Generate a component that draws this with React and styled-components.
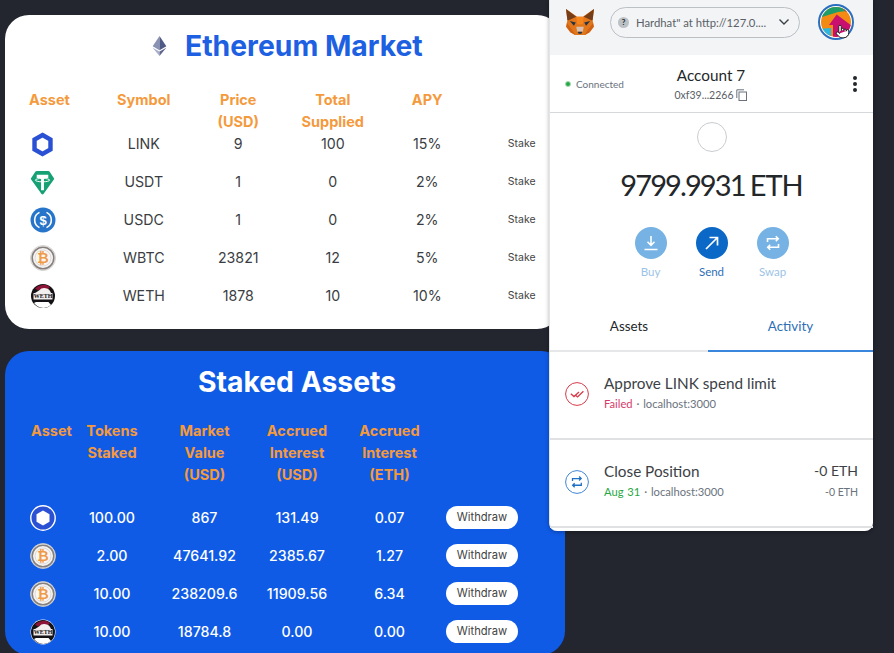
import React from "react";
import styled, { createGlobalStyle } from "styled-components";
import { Pointer } from "lucide-react";

const GlobalStyle = createGlobalStyle`
  html, body {
    margin: 0;
    height: 653px;
    overflow: hidden;
    background: #23252f;
    font-family: Inter, "Liberation Sans", sans-serif;
  }
`;

const Page = styled.div`
  position: relative;
  width: 894px;
  height: 653px;
  overflow: hidden;
  padding: 15px 0 0 5px;
  box-sizing: border-box;
  display: flex;
  flex-direction: column;
  gap: 22px;
`;

const MarketCard = styled.section`
  width: 556px;
  height: 314px;
  flex-shrink: 0;
  box-sizing: border-box;
  background: #fff;
  border-radius: 24px;
  padding: 14px 0 0 24px;
`;

const StakedCard = styled.section`
  width: 560px;
  height: 304px;
  flex-shrink: 0;
  box-sizing: border-box;
  background: #0f5be6;
  border-radius: 24px;
  padding: 14px 0 0 26px;
`;

const TitleRow = styled.div`
  display: flex;
  align-items: center;
  gap: 18px;
  height: 34px;
  margin: 0 0 26px 123px;
`;

const Title = styled.h1`
  margin: 0;
  font-size: 28.3px;
  line-height: 34px;
  font-weight: 700;
  color: ${(p) => p.$color};
`;

const StakedTitle = styled(Title)`
  text-align: center;
  width: 532px;
  margin-bottom: 21px;
`;

const TableRow = styled.div`
  display: grid;
  grid-template-columns: ${(p) => p.$cols};
  align-items: center;
  justify-items: center;
  height: ${(p) => (p.$header ? "auto" : "24px")};
  margin-bottom: ${(p) => (p.$header ? p.$gap : "14px")};
  font-size: 14.2px;
  color: ${(p) => p.$color};
  font-weight: ${(p) => p.$weight};
`;

const HeadCell = styled.div`
  font-size: 14.5px;
  line-height: 22px;
  font-weight: 700;
  color: #f59a3c;
  text-align: center;
  align-self: start;
  white-space: nowrap;
  justify-self: ${(p) => (p.$first ? "start" : "center")};
`;

const IconCell = styled.div`
  justify-self: start;
  margin: 2px 0 0 ${(p) => p.$left}px;
  height: 24px;
  display: flex;
  align-items: center;
`;

const StakeLink = styled.span`
  font-size: 10.5px;
  color: #444;
`;

const WithdrawButton = styled.button`
  width: 72px;
  height: 23px;
  padding: 0;
  border: none;
  border-radius: 12px;
  background: #fff;
  color: #444;
  font-family: inherit;
  font-size: 11.2px;
  font-weight: 400;
`;

/* metamask window floats over the dapp */
const Wallet = styled.aside`
  position: absolute;
  left: 549px;
  top: 0;
  width: 324px;
  height: 531px;
  background: #fff;
  border-left: 1px solid #e2e4e8;
  box-sizing: border-box;
  border-radius: 0 0 8px 8px;
  box-shadow: 0 1px 4px rgba(0, 0, 0, 0.3);
  font-family: Lato, "Open Sans", sans-serif;
  color: #24272a;
  display: flex;
  flex-direction: column;
`;

const WalletTop = styled.header`
  height: 55px;
  background: #f2f4f6;
  display: flex;
  align-items: center;
  padding: 0 0 11px 15px;
  box-sizing: border-box;
`;

const NetworkPill = styled.div`
  width: 190px;
  height: 31px;
  margin-left: 15px;
  box-sizing: border-box;
  border: 1px solid #bbc0c5;
  border-radius: 16px;
  display: flex;
  align-items: center;
  padding: 0 9px 0 7px;
  font-size: 11.3px;
  color: #5a6066;
  white-space: nowrap;
`;

const QuestionBadge = styled.span`
  width: 11px;
  height: 11px;
  border-radius: 50%;
  background: #bbc0c5;
  color: #24272a;
  font-size: 8px;
  font-weight: 700;
  display: flex;
  align-items: center;
  justify-content: center;
  margin-right: 7px;
  flex-shrink: 0;
`;

const PillText = styled.span`
  flex: 1;
`;

const AvatarWrap = styled.div`
  position: relative;
  margin-left: 18px;
  width: 36px;
  height: 36px;
`;

const HandCursor = styled.div`
  position: absolute;
  left: 17px;
  top: 20px;
  line-height: 0;
`;

const AccountBar = styled.div`
  height: 57px;
  border-bottom: 1px solid #d6d9dc;
  display: grid;
  grid-template-columns: 1fr auto 1fr;
  align-items: center;
  padding: 0 16px 0 15px;
`;

const Connected = styled.div`
  display: flex;
  align-items: center;
  gap: 5px;
  font-size: 10px;
  color: #6a737d;
`;

const GreenDot = styled.span`
  width: 4px;
  height: 4px;
  border-radius: 50%;
  background: #28a745;
  border: 1.5px solid #a8d8b4;
`;

const AccountInfo = styled.div`
  text-align: center;
`;

const AccountName = styled.div`
  font-size: 15.3px;
  line-height: 20px;
  margin-bottom: 3px;
`;

const Address = styled.div`
  font-size: 10.5px;
  line-height: 14px;
  color: #5a6066;
  display: flex;
  align-items: center;
  gap: 3px;
`;

const KebabWrap = styled.div`
  justify-self: end;
  display: flex;
  flex-direction: column;
  gap: 2px;
  margin-top: 1px;
`;

const KebabDot = styled.span`
  width: 4px;
  height: 4px;
  border-radius: 50%;
  background: #24272a;
`;

const BalanceSection = styled.div`
  display: flex;
  flex-direction: column;
  align-items: center;
  height: 191px;
  padding-top: 9px;
  box-sizing: border-box;
`;

const TokenCircle = styled.div`
  width: 28px;
  height: 28px;
  border-radius: 50%;
  border: 1px solid #c9cccf;
`;

const Balance = styled.div`
  margin-top: 13px;
  font-size: 29px;
  line-height: 40px;
  font-weight: 400;
  display: flex;
  gap: 5px;
`;

const BalanceAmount = styled.span`
  letter-spacing: -1.9px;
`;

const BalanceUnit = styled.span`
  letter-spacing: -1px;
`;

const ActionRow = styled.div`
  margin-top: 22px;
  display: flex;
  gap: 29px;
`;

const Action = styled.div`
  width: 32px;
  display: flex;
  flex-direction: column;
  align-items: center;
  gap: 6px;
  font-size: 11.5px;
  color: ${(p) => (p.$active ? "#2d6fb5" : "#9cc3e6")};
`;

const ActionCircle = styled.div`
  width: 32px;
  height: 32px;
  border-radius: 50%;
  background: ${(p) => (p.$active ? "#0b68c6" : "#76b2e4")};
  display: flex;
  align-items: center;
  justify-content: center;
`;

const Tabs = styled.div`
  display: grid;
  grid-template-columns: 158px 1fr;
  height: 48px;
`;

const Tab = styled.div`
  display: flex;
  align-items: center;
  justify-content: center;
  font-size: 13.4px;
  padding-bottom: 2px;
  box-sizing: border-box;
  color: ${(p) => (p.$active ? "#2d6fb5" : "#24272a")};
  border-bottom: 2px solid ${(p) => (p.$active ? "#3a86dc" : "#e6e7e9")};
`;

const Activity = styled.div`
  height: 88px;
  box-sizing: border-box;
  border-bottom: 2px solid #dfe1e3;
  display: flex;
  padding: 21px 15px 0 15px;
`;

const ActivityIcon = styled.div`
  width: 24px;
  height: 24px;
  margin-top: 9px;
  margin-right: 15px;
  flex-shrink: 0;
`;

const ActivityBody = styled.div`
  flex: 1;
`;

const ActivityTitle = styled.div`
  font-size: 15.3px;
  line-height: 20px;
  color: #3c4146;
`;

const ActivitySub = styled.div`
  font-size: 11.2px;
  line-height: 14px;
  margin-top: 4px;
  color: #6a737d;
  word-spacing: 1px;
`;

const Status = styled.span`
  color: ${(p) => p.$color};
`;

const ActivityAmount = styled.div`
  text-align: right;
`;

const AmountMain = styled.div`
  font-size: 14px;
  line-height: 20px;
  color: #3c4146;
`;

const AmountSub = styled.div`
  font-size: 10.5px;
  line-height: 14px;
  margin-top: 4px;
  color: #6a737d;
`;

const ChainlinkIcon = () => (
  <svg width="25" height="25" viewBox="0 0 26 26">
    <path d="M13 3.100 21.300 7.800v10.400L13 22.900 4.700 18.200V7.800Z" fill="none" stroke="#2a50d4" strokeWidth="4.600" />
  </svg>
);

const ChainlinkRingIcon = () => (
  <svg width="26" height="26" viewBox="0 0 26 26">
    <circle cx="13" cy="13" r="12.200" fill="#2a50d4" stroke="#fff" strokeWidth="1.400" />
    <path d="M13 5.500 19.500 9.200v7.600L13 20.500 6.500 16.800V9.200Z" fill="#fff" />
  </svg>
);

const TetherIcon = () => (
  <svg width="25" height="25" viewBox="0 0 26 26">
    <path d="M7 1h12q.8 0 1.300.6l4.600 7.100q.5.700-.1 1.300L14 25q-1 1-2 0L1.200 10q-.6-.6-.1-1.300L5.700 1.600Q6.200 1 7 1Z" fill="#16a175" />
    <path d="M7 5h12v3.200h-4.500V21h-3V8.200H7Z" fill="#fff" />
    <ellipse cx="13" cy="10.500" rx="7.500" ry="1.800" fill="none" stroke="#fff" strokeWidth="1" />
  </svg>
);

const UsdcIcon = () => (
  <svg width="26" height="26" viewBox="0 0 26 26">
    <circle cx="13" cy="13" r="12.500" fill="#2775ca" />
    <path d="M9.500 5.400a8.400 8.400 0 0 0 0 15.200M16.500 5.400a8.400 8.400 0 0 1 0 15.200" fill="none" stroke="#fff" strokeWidth="1.600" />
    <text x="13" y="17.500" textAnchor="middle" fontSize="13" fontWeight="700" fill="#fff" fontFamily="Liberation Sans, sans-serif">$</text>
  </svg>
);

const WbtcIcon = () => (
  <svg width="26" height="26" viewBox="0 0 26 26">
    <circle cx="13" cy="13" r="12.500" fill="#f4f2ef" stroke="#c9c6c4" strokeWidth=".8" />
    <circle cx="13" cy="13" r="10.800" fill="#f6f4f2" stroke="#85807f" strokeWidth="1.600" />
    <circle cx="13" cy="13" r="8" fill="#f8f6f3" stroke="#d5d2d0" strokeWidth=".8" />
    <text x="13" y="17.800" textAnchor="middle" fontSize="14" fontWeight="700" fill="#ee9a48" fontFamily="DejaVu Sans, sans-serif">₿</text>
  </svg>
);

const WethIcon = () => (
  <svg width="26" height="26" viewBox="0 0 26 26">
    <circle cx="13" cy="13" r="12.500" fill="#fff" />
    <circle cx="13" cy="13" r="12" fill="#141214" />
    <path d="M5 5.500a11.600 11.600 0 0 1 15-1.600l-3 3.500a7 7 0 0 0-9 0Z" fill="#8b1438" />
    <path d="M9 7.500a7 7 0 0 1 12 2.500h-16Z" fill="#f4efef" />
    <path d="M4 20a11.500 11.500 0 0 0 17 2l-2.500-3H6Z" fill="#fff" />
    <path d="M3.500 10h19v6.500h-19Z" fill="#f0ecec" />
    <text x="13" y="15.200" textAnchor="middle" fontSize="6" fontWeight="700" fill="#111" fontFamily="Liberation Serif, serif">WETH</text>
  </svg>
);

const EthIcon = () => (
  <svg width="15" height="20" viewBox="0 0 15 22">
    <path d="M7.500 0 0 11.200l7.500 4.400Z" fill="#8a92b2" />
    <path d="M7.500 0 15 11.200l-7.500 4.400Z" fill="#4f5a86" />
    <path d="M0 12.800 7.500 22v-5Z" fill="#a8aecb" />
    <path d="M15 12.800 7.500 22v-5Z" fill="#62688f" />
  </svg>
);

const FoxLogo = () => (
  <svg width="30" height="28" viewBox="0 0 32 30">
    <path d="M1 1 13 9.500h6L31 1l-1.500 12 1.500 7-4.500 6-5 3h-11l-5-3L1 20l1.500-7Z" fill="#e2761b" />
    <path d="M1 1l11 8.500-8 3.500-1.500 0Z" fill="#763d16" />
    <path d="M31 1 20 9.500l8 3.500 1.500 0Z" fill="#763d16" />
    <path d="M12 9.500h8l-1 8h-6Z" fill="#f6851b" />
    <path d="M5 14l6.500 1.500L9.500 19Z" fill="#233447" />
    <path d="M27 14l-6.500 1.500L22.500 19Z" fill="#233447" />
    <path d="M12 20h8l-1 5.500h-6Z" fill="#d7c1b3" />
    <path d="M13.500 25.500h5l-1 2h-3Z" fill="#233447" />
    <path d="M2 16l6 8 3 5-5-3-4.500-6Z" fill="#cd6116" />
    <path d="M30 16l-6 8-3 5 5-3 4.500-6Z" fill="#cd6116" />
  </svg>
);

const Avatar = () => (
  <svg width="36" height="36" viewBox="0 0 36 36">
    <defs>
      <clipPath id="avatarClip">
        <circle cx="18" cy="18" r="15" />
      </clipPath>
    </defs>
    <circle cx="18" cy="18" r="17" fill="#fff" stroke="#2a6fc0" strokeWidth="2" />
    <g clipPath="url(#avatarClip)">
      <rect width="36" height="36" fill="#f28a14" />
      <path d="M0 0h36v6L20 8 4 13H0Z" fill="#1f9c68" />
      <path d="M22 2h14v6h-8Z" fill="#b8452b" />
      <path d="M0 25l13-1v12H0Z" fill="#2bb7e0" />
      <path d="M11 21 18.700 10.500 34 22v14H15V21Z" fill="#c9106f" />
    </g>
  </svg>
);

const CopyIcon = () => (
  <svg width="11" height="12" viewBox="0 0 11 12" fill="none" stroke="#6a737d" strokeWidth="1">
    <rect x="3" y="3" width="7.500" height="8.500" />
    <path d="M.8 9V.8H8" />
  </svg>
);

const Chevron = () => (
  <svg width="12" height="8" viewBox="0 0 12 8" fill="none" stroke="#3c4146" strokeWidth="1.400">
    <path d="M1.500 1.500 6 6l4.500-4.500" />
  </svg>
);

const BuyGlyph = () => (
  <svg width="16" height="16" viewBox="0 0 16 16" fill="none" stroke="#fff" strokeWidth="1.600">
    <path d="M8 1v9M4.500 6.800 8 10.300l3.500-3.500M1.500 14.500h13" />
  </svg>
);

const SendGlyph = () => (
  <svg width="16" height="16" viewBox="0 0 16 16" fill="none" stroke="#fff" strokeWidth="1.700">
    <path d="M2 14 13.500 2.500M5.500 2.500h8v8" />
  </svg>
);

const SwapGlyph = () => (
  <svg width="16" height="16" viewBox="0 0 16 16" fill="none" stroke="#fff" strokeWidth="1.600">
    <path d="M2.500 7V3.800h10.500M10.800 1.300l2.500 2.500-2.500 2.500M13.500 9v3.200H3M5.200 9.700l-2.500 2.500 2.500 2.500" />
  </svg>
);

const ApproveIcon = () => (
  <svg width="24" height="24" viewBox="0 0 24 24" fill="none" stroke="#d73a49">
    <circle cx="12" cy="12" r="11.400" strokeWidth="1" />
    <path d="M5.800 11.800l3.200 2.800 5-4.600M10.800 13.600l1.800 1.400 5.800-5.800" strokeWidth="1.300" />
  </svg>
);

const SwapRing = () => (
  <svg width="24" height="24" viewBox="0 0 24 24" fill="none">
    <circle cx="12" cy="12" r="11.400" stroke="#3f86d6" strokeWidth="1" />
    <g transform="translate(5.500 5.500) scale(.8)">
      <path d="M2.500 7V3.800h10.500M10.800 1.300l2.500 2.500-2.500 2.500M13.500 9v3.200H3M5.200 9.700l-2.500 2.500 2.500 2.500" stroke="#1f6fc4" strokeWidth="1.600" />
    </g>
  </svg>
);

const marketCols = "67.5px repeat(5, 94.5px)";
const stakedCols = "34.75px repeat(5, 92.5px)";

const marketRows = [
  [<ChainlinkIcon />, "LINK", "9", "100", "15%"],
  [<TetherIcon />, "USDT", "1", "0", "2%"],
  [<UsdcIcon />, "USDC", "1", "0", "2%"],
  [<WbtcIcon />, "WBTC", "23821", "12", "5%"],
  [<WethIcon />, "WETH", "1878", "10", "10%"],
];

const stakedRows = [
  [<ChainlinkRingIcon />, "100.00", "867", "131.49", "0.07"],
  [<WbtcIcon />, "2.00", "47641.92", "2385.67", "1.27"],
  [<WbtcIcon />, "10.00", "238209.6", "11909.56", "6.34"],
  [<WethIcon />, "10.00", "18784.8", "0.00", "0.00"],
];

export default function App() {
  return (
    <>
      <GlobalStyle />
      <Page>
        <MarketCard>
          <TitleRow>
            <EthIcon />
            <Title $color="#1d60e2">Ethereum Market</Title>
          </TitleRow>
          <TableRow $header $cols={marketCols} $gap="-3px">
            <HeadCell $first>Asset</HeadCell>
            <HeadCell>Symbol</HeadCell>
            <HeadCell>Price<br />(USD)</HeadCell>
            <HeadCell>Total<br />Supplied</HeadCell>
            <HeadCell>APY</HeadCell>
            <div />
          </TableRow>
          {marketRows.map((row) => (
            <TableRow key={row[1]} $cols={marketCols} $color="#3a3d42" $weight={400}>
              <IconCell $left={1}>{row[0]}</IconCell>
              <span>{row[1]}</span>
              <span>{row[2]}</span>
              <span>{row[3]}</span>
              <span>{row[4]}</span>
              <StakeLink>Stake</StakeLink>
            </TableRow>
          ))}
        </MarketCard>

        <StakedCard>
          <StakedTitle $color="#fff">Staked Assets</StakedTitle>
          <TableRow $header $cols={stakedCols} $gap="18px">
            <HeadCell $first>Asset</HeadCell>
            <HeadCell>Tokens<br />Staked</HeadCell>
            <HeadCell>Market<br />Value<br />(USD)</HeadCell>
            <HeadCell>Accrued<br />Interest<br />(USD)</HeadCell>
            <HeadCell>Accrued<br />Interest<br />(ETH)</HeadCell>
            <div />
          </TableRow>
          {stakedRows.map((row) => (
            <TableRow key={row[2]} $cols={stakedCols} $color="#fff" $weight={500}>
              <IconCell $left={-1}>{row[0]}</IconCell>
              <span>{row[1]}</span>
              <span>{row[2]}</span>
              <span>{row[3]}</span>
              <span>{row[4]}</span>
              <WithdrawButton>Withdraw</WithdrawButton>
            </TableRow>
          ))}
        </StakedCard>

        <Wallet>
          <WalletTop>
            <FoxLogo />
            <NetworkPill>
              <QuestionBadge>?</QuestionBadge>
              <PillText>Hardhat" at http://127.0....</PillText>
              <Chevron />
            </NetworkPill>
            <AvatarWrap>
              <Avatar />
              <HandCursor>
                <Pointer size={15} color="#222" fill="#fff" strokeWidth={1.6} />
              </HandCursor>
            </AvatarWrap>
          </WalletTop>

          <AccountBar>
            <Connected>
              <GreenDot />
              Connected
            </Connected>
            <AccountInfo>
              <AccountName>Account 7</AccountName>
              <Address>
                0xf39...2266
                <CopyIcon />
              </Address>
            </AccountInfo>
            <KebabWrap>
              <KebabDot />
              <KebabDot />
              <KebabDot />
            </KebabWrap>
          </AccountBar>

          <BalanceSection>
            <TokenCircle />
            <Balance>
              <BalanceAmount>9799.9931</BalanceAmount>
              <BalanceUnit>ETH</BalanceUnit>
            </Balance>
            <ActionRow>
              <Action>
                <ActionCircle><BuyGlyph /></ActionCircle>
                Buy
              </Action>
              <Action $active>
                <ActionCircle $active><SendGlyph /></ActionCircle>
                Send
              </Action>
              <Action>
                <ActionCircle><SwapGlyph /></ActionCircle>
                Swap
              </Action>
            </ActionRow>
          </BalanceSection>

          <Tabs>
            <Tab>Assets</Tab>
            <Tab $active>Activity</Tab>
          </Tabs>

          <Activity>
            <ActivityIcon><ApproveIcon /></ActivityIcon>
            <ActivityBody>
              <ActivityTitle>Approve LINK spend limit</ActivityTitle>
              <ActivitySub>
                <Status $color="#d73a6a">Failed</Status> · localhost:3000
              </ActivitySub>
            </ActivityBody>
          </Activity>

          <Activity>
            <ActivityIcon><SwapRing /></ActivityIcon>
            <ActivityBody>
              <ActivityTitle>Close Position</ActivityTitle>
              <ActivitySub>
                <Status $color="#28a745">Aug 31</Status> · localhost:3000
              </ActivitySub>
            </ActivityBody>
            <ActivityAmount>
              <AmountMain>-0 ETH</AmountMain>
              <AmountSub>-0 ETH</AmountSub>
            </ActivityAmount>
          </Activity>
        </Wallet>
      </Page>
    </>
  );
}
